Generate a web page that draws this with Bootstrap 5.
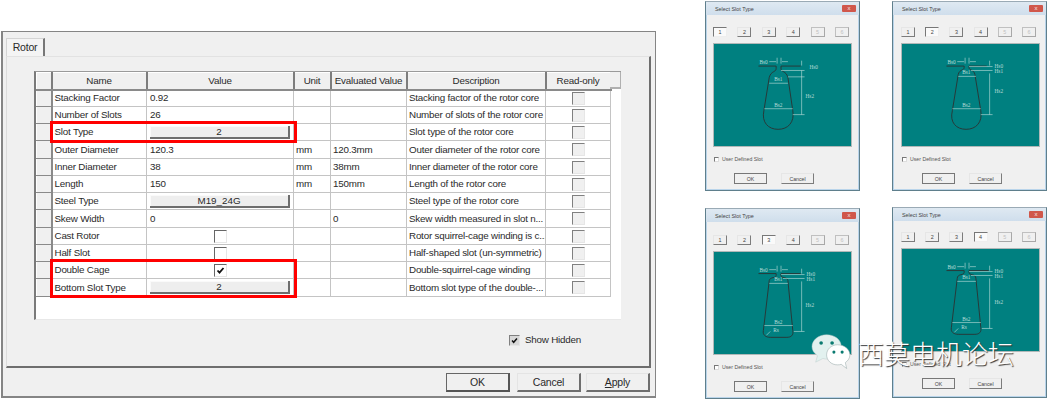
<!DOCTYPE html>
<html lang="en">
<head>
  <meta charset="UTF-8">
  <title>Rotor slot types</title>
  <link href="https://cdn.jsdelivr.net/npm/bootstrap@5.3.3/dist/css/bootstrap.min.css" rel="stylesheet">
  <style>
    html, body { height: 400px; overflow: hidden; }
    body {
      background: #fff;
      font-family: "Liberation Sans", Arial, sans-serif;
      font-size: 9.8px;
      letter-spacing: -.2px;
      color: #2a2a2a;
    }
    .page { width: 1048px; height: 400px; position: relative; padding: 31px 0 0 1px; }

    /* big properties dialog */
    .prop-dlg {
      width: 655px; height: 367px;
      background: #f0f0f0;
      border: 1px solid #858585; border-left-width: 2px; border-bottom-width: 2px;
      padding: 6px 4px 0 3px;
    }
    .prop-tabs { height: 18px; }
    .prop-tab {
      width: 39px; height: 18px;
      background: #f4f4f4;
      border: 1px solid #d4d4d4; border-bottom: 0; border-right: 2px solid #777;
      font-size: 10.5px; line-height: 16px; text-align: center;
      position: relative; z-index: 1;
    }
    .prop-pane {
      height: 312px; background: #f0f0f0;
      border-top: 1px solid #e2e2e2; border-left: 1px solid #dcdcdc;
      border-right: 2px solid #6e6e6e; border-bottom: 2px solid #6e6e6e;
      padding: 14px 0 0 27px;
    }
    .grid-box {
      width: 587px; height: 249px; background: #fff; position: relative;
      border-left: 2px solid #7a7a7a; border-top: 1px solid #9a9a9a;
      border-bottom: 1px solid #e8e8e8;
    }
    .prop-table { width: 574px; table-layout: fixed; border-collapse: collapse; }
    .prop-table th, .prop-table td {
      height: 17px; padding: 0 2px; white-space: nowrap; overflow: hidden;
      border-right: 1px solid #c4c4c4; border-bottom: 1px solid #c4c4c4;
      font-weight: 400; line-height: 14px; vertical-align: middle;
      background: #fff; color: #2a2a2a;
    }
    .prop-table tbody tr:nth-child(4n) td { height: 18px; }
    .prop-table td:nth-child(3) { padding-left: 3px; padding-right: 3px; }
    .prop-table thead th {
      height: 17px; background: #f0f0f0; text-align: center;
      border-top: 1px solid #fff; border-left: 1px solid #fff;
      border-right: 2px solid #7d7d7d; border-bottom: 2px solid #8a8a8a;
    }
    .prop-table .row-head {
      background: #f0f0f0;
      border-top: 1px solid #fff; border-left: 1px solid #fff;
      border-right: 2px solid #8a8a8a; border-bottom: 1px solid #8a8a8a;
    }
    .end-head { position: absolute; left: 574px; top: 0; width: 11px; height: 17px; background: #f0f0f0; border-right: 1px solid #b0b0b0; border-bottom: 2px solid #b0b0b0; }
    .cell-btn {
      display: block; width: 100%; height: 13px; padding: 0; border-radius: 0;
      background: #eee; color: #2a2a2a; font-size: 9.8px; line-height: 11px;
      border: 0; border-right: 2px solid #6e6e6e; border-bottom: 2px solid #6e6e6e;
      box-shadow: inset 1px 1px 0 #fafafa;
    }
    .tick-box {
      display: block; width: 13px; height: 13px; margin: 0 auto;
      background: #f0f0f0;
      border-top: 1px solid #808080; border-left: 1px solid #808080;
      border-right: 1px solid #e6e6e6; border-bottom: 1px solid #e6e6e6;
    }
    .tick-box.live { background: #fff; border-top-color: #666; border-left-color: #666; }
    .tick-box svg { display: block; width: 100%; height: 100%; }
    .red-frame { position: absolute; left: 14px; width: 247px; border: 3px solid #f00; pointer-events: none; }
    .frame-a { top: 49px; height: 22px; }
    .frame-b { top: 187px; height: 39px; }
    .hidden-row { margin-top: 14px; padding-right: 68px; height: 13px; }
    .tick-box.grey { width: 11px; height: 11px; background: #d8d8d8; margin: 0 5px 0 0; }
    .foot-row { padding: 5px 1px 0 0; gap: 5px; }
    .win-btn {
      width: 64px; height: 19px; padding: 0; border-radius: 0; background: #f0f0f0; color: #2a2a2a;
      font-size: 10.5px; line-height: 15px; letter-spacing: -.2px;
      border: 1px solid #e4e4e4; border-right: 2px solid #6e6e6e; border-bottom: 2px solid #6e6e6e;
    }
    .win-btn.default-btn { margin-right: 2px; border: 1px solid #666; border-right: 2px solid #555; border-bottom: 2px solid #555; }

    /* four small slot dialogs */
    .slot-area {
      position: absolute; left: 705px; top: 1px;
      display: grid; grid-template-columns: 155px 155px; column-gap: 32px;
      grid-template-rows: 190px 192px; row-gap: 16px;
      letter-spacing: 0;
    }
    .slot-dlg {
      background: #f0f0f0; color: #555; font-size: 5.2px; line-height: 7px;
      border: 1px solid #5f7f8c; border-top-color: #9aaab5;
      padding: 0 7px 0 7px;
      box-shadow: inset 0 0 0 1px #b9d4ea;
    }
    .slot-dlg.shift-down { margin-top: 1px; }
    .slot-dlg.shift-up { margin-bottom: 1px; }
    .slot-dlg.right-col { padding-left: 8px; }
    .slot-title {
      height: 13px; margin: 0 -7px; padding: 0 3px 0 9px; line-height: 15px;
      background: linear-gradient(#dfe9f2, #cfdeec); color: #444;
      font-size: 5.4px;
    }
    .right-col .slot-title { margin-left: -8px; }
    .slot-close { width: 14px; height: 7px; margin-top: 3px; background: #d0574b; display: block; border-radius: 1px; color: #f4e4e4; font-size: 6px; line-height: 6px; text-align: center; }
    .slot-tabs { padding: 12px 3px 6px 0; }
    .slot-tabs.high { padding-top: 11px; }
    .slot-tabs.low { padding-top: 13px; }
    .slot-num {
      width: 14px; height: 10px; padding: 0; border-radius: 0; background: #f0f0f0; color: #444;
      font-size: 5.4px; line-height: 8px;
      border: 1px solid #e6e6e6; border-right: 1px solid #7c7c7c; border-bottom: 1px solid #7c7c7c;
    }
    .slot-num.on { background: #fafafa; border: 1px solid #bbb; border-top-color: #777; border-left-color: #777; border-right-color: #eee; border-bottom-color: #eee; }
    .slot-num:disabled { color: #c0c0c0; opacity: 1; background: #f0f0f0; border-right-color: #a8a8a8; border-bottom-color: #a8a8a8; }
    .slot-view { display: block; width: 139px; height: 104px; background: #008080; border: 1px solid #b0b8b8; }
    .slot-view text { font-family: "Liberation Serif", serif; font-size: 5.4px; fill: #b9dcd8; }
    .slot-view .wall { fill: none; stroke: #283838; stroke-width: 1; }
    .slot-view .dim { fill: none; stroke: #c4e2de; stroke-width: .6; }
    .user-row { margin-top: 9px; height: 7px; }
    .mini-box { width: 5px; height: 5px; margin: 0 3px 0 1px; background: #fff; border: 1px solid #777; border-right-color: #ddd; border-bottom-color: #ddd; display: block; }
    .slot-foot { margin-top: 10px; padding-left: 21px; gap: 14px; }
    .mini-btn {
      width: 33px; height: 11px; padding: 0; border-radius: 0; background: #f0f0f0; color: #444;
      font-size: 5.2px; line-height: 8px;
      border: 1px solid #e6e6e6; border-right: 1px solid #7c7c7c; border-bottom: 1px solid #7c7c7c;
    }
    .mini-btn.default-btn { border: 1px solid #777; }

    /* watermark over the lower dialogs */
    .wm-logo { position: absolute; left: 809px; top: 332px; width: 48px; height: 42px; }
    .wm-text {
      position: absolute; left: 858px; top: 336px; line-height: 34px; white-space: nowrap; letter-spacing: 0;
      font-family: "Noto Sans CJK SC", sans-serif; font-size: 26px; font-weight: 300; color: #fff;
      text-shadow: 1px 1px 1px #333;
    }
  </style>
</head>
<body>
<div class="page">

  <div class="prop-dlg">
    <div class="prop-tabs d-flex"><div class="prop-tab">Rotor</div></div>
    <div class="prop-pane">
      <div class="grid-box">
        <table class="prop-table">
          <colgroup><col style="width:15px"><col style="width:95px"><col style="width:147px"><col style="width:37px"><col style="width:76px"><col style="width:139px"><col style="width:65px"></colgroup>
          <thead><tr><th></th><th>Name</th><th>Value</th><th>Unit</th><th>Evaluated Value</th><th>Description</th><th>Read-only</th></tr></thead>
          <tbody>
            <tr><td class="row-head"></td><td>Stacking Factor</td><td>0.92</td><td></td><td></td><td>Stacking factor of the rotor core</td><td><span class="tick-box"></span></td></tr>
            <tr><td class="row-head"></td><td>Number of Slots</td><td>26</td><td></td><td></td><td>Number of slots of the rotor core</td><td><span class="tick-box"></span></td></tr>
            <tr><td class="row-head"></td><td>Slot Type</td><td><button class="btn cell-btn">2</button></td><td></td><td></td><td>Slot type of the rotor core</td><td><span class="tick-box"></span></td></tr>
            <tr><td class="row-head"></td><td>Outer Diameter</td><td>120.3</td><td>mm</td><td>120.3mm</td><td>Outer diameter of the rotor core</td><td><span class="tick-box"></span></td></tr>
            <tr><td class="row-head"></td><td>Inner Diameter</td><td>38</td><td>mm</td><td>38mm</td><td>Inner diameter of the rotor core</td><td><span class="tick-box"></span></td></tr>
            <tr><td class="row-head"></td><td>Length</td><td>150</td><td>mm</td><td>150mm</td><td>Length of the rotor core</td><td><span class="tick-box"></span></td></tr>
            <tr><td class="row-head"></td><td>Steel Type</td><td><button class="btn cell-btn">M19_24G</button></td><td></td><td></td><td>Steel type of the rotor core</td><td><span class="tick-box"></span></td></tr>
            <tr><td class="row-head"></td><td>Skew Width</td><td>0</td><td></td><td>0</td><td>Skew width measured in slot n...</td><td><span class="tick-box"></span></td></tr>
            <tr><td class="row-head"></td><td>Cast Rotor</td><td><span class="tick-box live"></span></td><td></td><td></td><td>Rotor squirrel-cage winding is c...</td><td><span class="tick-box"></span></td></tr>
            <tr><td class="row-head"></td><td>Half Slot</td><td><span class="tick-box live"></span></td><td></td><td></td><td>Half-shaped slot (un-symmetric)</td><td><span class="tick-box"></span></td></tr>
            <tr><td class="row-head"></td><td>Double Cage</td><td><span class="tick-box live"><svg viewBox="0 0 11 11"><path d="M2.500 5.500l2 2.200 4-4.700" fill="none" stroke="#111" stroke-width="1.800"/></svg></span></td><td></td><td></td><td>Double-squirrel-cage winding</td><td><span class="tick-box"></span></td></tr>
            <tr><td class="row-head"></td><td>Bottom Slot Type</td><td><button class="btn cell-btn">2</button></td><td></td><td></td><td>Bottom slot type of the double-...</td><td><span class="tick-box"></span></td></tr>
          </tbody>
        </table>
        <div class="end-head"></div>
        <div class="red-frame frame-a"></div>
        <div class="red-frame frame-b"></div>
      </div>
      <div class="hidden-row d-flex justify-content-end align-items-center">
        <span class="tick-box grey"><svg viewBox="0 0 11 11"><path d="M2.500 5.500l2 2.200 4-4.700" fill="none" stroke="#111" stroke-width="1.800"/></svg></span>
        <span>Show Hidden</span>
      </div>
    </div>
    <div class="foot-row d-flex justify-content-end">
      <button class="btn win-btn default-btn">OK</button>
      <button class="btn win-btn">Cancel</button>
      <button class="btn win-btn"><u>A</u>pply</button>
    </div>
  </div>

  <div class="slot-area">
    <div class="slot-dlg">
      <div class="slot-title d-flex justify-content-between"><span>Select Slot Type</span><span class="slot-close">x</span></div>
      <div class="slot-tabs d-flex justify-content-between">
        <button class="btn slot-num on">1</button><button class="btn slot-num">2</button><button class="btn slot-num">3</button><button class="btn slot-num">4</button><button class="btn slot-num" disabled>5</button><button class="btn slot-num" disabled>6</button>
      </div>
      <svg class="slot-view" viewBox="0 0 139 104">
        <path class="wall" d="M45 22.500H63V25C63 29 58 27 56 34L50.500 68C48 80 55 87 65 87S82 80 80 68L75 34C73 27 68 29 68 25V22.500H88"/>
        <path class="dim" d="M64 14V20M68 14V20M56 18H63M69 18H75M89 17V22M89 27V72M75 33.500H92M80 72H92M68 27H92M56 40H75M51 66H80"/>
        <text x="46" y="20">Bs0</text><text x="61" y="38">Bs1</text><text x="61" y="64">Bs2</text><text x="97" y="25">Hs0</text><text x="93" y="55">Hs2</text>
      </svg>
      <div class="user-row d-flex align-items-center"><span class="mini-box"></span><span>User Defined Slot</span></div>
      <div class="slot-foot d-flex"><button class="btn mini-btn default-btn">OK</button><button class="btn mini-btn">Cancel</button></div>
    </div>

    <div class="slot-dlg right-col">
      <div class="slot-title d-flex justify-content-between"><span>Select Slot Type</span><span class="slot-close">x</span></div>
      <div class="slot-tabs d-flex justify-content-between">
        <button class="btn slot-num">1</button><button class="btn slot-num on">2</button><button class="btn slot-num">3</button><button class="btn slot-num">4</button><button class="btn slot-num" disabled>5</button><button class="btn slot-num" disabled>6</button>
      </div>
      <svg class="slot-view" viewBox="0 0 139 104">
        <path class="wall" d="M45 22.500H63V24C63 27 58 26 57 31L51 68C48 80 55 87 65 87S82 80 80 68L74 31C73 26 68 27 68 24V22.500H86"/>
        <path class="dim" d="M64 14V20M68 14V20M56 18H63M69 18H75M89 17V22M89 30V72M68 23H92M70 27H92M80 72H92M57 33H75M51 66H80"/>
        <text x="46" y="20">Bs0</text><text x="61" y="31">Bs1</text><text x="61" y="64">Bs2</text><text x="94" y="24">Hs0</text><text x="94" y="29.500">Hs1</text><text x="94" y="50">Hs2</text>
      </svg>
      <div class="user-row d-flex align-items-center"><span class="mini-box"></span><span>User Defined Slot</span></div>
      <div class="slot-foot d-flex"><button class="btn mini-btn default-btn">OK</button><button class="btn mini-btn">Cancel</button></div>
    </div>

    <div class="slot-dlg shift-down">
      <div class="slot-title d-flex justify-content-between"><span>Select Slot Type</span><span class="slot-close">x</span></div>
      <div class="slot-tabs low d-flex justify-content-between">
        <button class="btn slot-num">1</button><button class="btn slot-num">2</button><button class="btn slot-num on">3</button><button class="btn slot-num">4</button><button class="btn slot-num" disabled>5</button><button class="btn slot-num" disabled>6</button>
      </div>
      <svg class="slot-view" viewBox="0 0 139 104">
        <path class="wall" d="M45 22H63V24C63 27 57 25 56 29L50 80C49 85 53 87 57 87H74C78 87 81 85 80 80L75 29C74 25 68 27 68 24V22H88"/>
        <path class="dim" d="M64 14V20M68 14V20M56 18H63M69 18H75M89 17V22M89 30V81M68 23H92M70 27H92M81 81H92M56 32H75M51 75H80M53 85L57 81"/>
        <text x="46" y="20">Bs0</text><text x="61" y="30">Bs1</text><text x="61" y="73">Bs2</text><text x="60" y="82">Rs</text><text x="94" y="24">Hs0</text><text x="94" y="29.500">Hs1</text><text x="93" y="56">Hs2</text>
      </svg>
      <div class="user-row d-flex align-items-center"><span class="mini-box"></span><span>User Defined Slot</span></div>
      <div class="slot-foot d-flex"><button class="btn mini-btn default-btn">OK</button><button class="btn mini-btn">Cancel</button></div>
    </div>

    <div class="slot-dlg right-col shift-up">
      <div class="slot-title d-flex justify-content-between"><span>Select Slot Type</span><span class="slot-close">x</span></div>
      <div class="slot-tabs high d-flex justify-content-between">
        <button class="btn slot-num">1</button><button class="btn slot-num">2</button><button class="btn slot-num">3</button><button class="btn slot-num on">4</button><button class="btn slot-num" disabled>5</button><button class="btn slot-num" disabled>6</button>
      </div>
      <svg class="slot-view" viewBox="0 0 139 104">
        <path class="wall" d="M45 22H63V24C63 27 56 25 56 30L50 80C49 85 53 87 57 87H74C78 87 81 85 80 80L75 30C75 25 68 27 68 24V22H88"/>
        <path class="dim" d="M64 14V20M68 14V20M56 18H63M69 18H75M89 17V22M89 30V81M68 23H92M70 27H92M81 81H92M56 33H75M51 75H80M53 85L57 81"/>
        <text x="46" y="20">Bs0</text><text x="61" y="31">Bs1</text><text x="61" y="73">Bs2</text><text x="60" y="82">Rs</text><text x="94" y="24">Hs0</text><text x="94" y="29.500">Hs1</text><text x="94" y="56">Hs2</text>
      </svg>
      <div class="user-row d-flex align-items-center"><span class="mini-box"></span><span>User Defined Slot</span></div>
      <div class="slot-foot d-flex"><button class="btn mini-btn default-btn">OK</button><button class="btn mini-btn">Cancel</button></div>
    </div>
  </div>

  <svg class="wm-logo" viewBox="0 0 52 46">
    <path d="M19 3C10 3 3 9 3 16c0 4 2 7 6 10l-2 7 8-4c2 .5 3 .6 4 .6 9 0 16-6 16-13.600S28 3 19 3z" fill="#e2f1ef" stroke="#b9c9c7" stroke-width=".5"/>
    <path d="M31 14c-7 0-12 5-12 11s5 11 12 11c1.500 0 3-.2 4-.6l6 4.600-1.500-6.500c3-2 5-5 5-8.500 0-6-6-11-13.500-11z" fill="#fff" stroke="#9aa" stroke-width=".6"/>
    <circle cx="13" cy="12" r="2" fill="#0a7a70"/><circle cx="25" cy="12" r="2" fill="#0a7a70"/>
    <circle cx="27" cy="22" r="1.700" fill="#0a7a70"/><circle cx="36" cy="22" r="1.700" fill="#0a7a70"/>
  </svg>
  <div class="wm-text">西莫电机论坛</div>
</div>
<script src="https://cdn.jsdelivr.net/npm/bootstrap@5.3.3/dist/js/bootstrap.bundle.min.js"></script>
</body>
</html>
